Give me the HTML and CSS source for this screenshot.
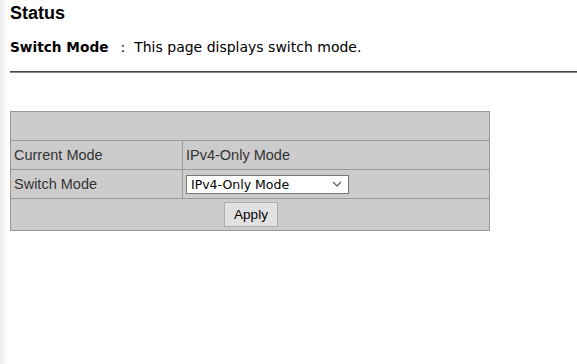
FILE: index.html
```html
<!DOCTYPE html>
<html lang="en">
  <head>
    <meta charset="UTF-8" />
    <title>Status - Switch Mode</title>
    <link rel="stylesheet" href="styles.css">
  </head>
  <body>
    <div class="page">
      <h2 class="page-title">Status</h2>
      <p class="page-desc">
        <strong>Switch Mode</strong><span class="colon">:</span>This page displays switch mode.
      </p>
      <hr class="divider" />

      <table class="config-table">
        <tr class="head-row">
          <td colspan="2">&nbsp;</td>
        </tr>
        <tr>
          <td class="label">Current Mode</td>
          <td>IPv4-Only Mode</td>
        </tr>
        <tr>
          <td class="label">Switch Mode</td>
          <td>
            <div class="select-box">
              <span>IPv4-Only Mode</span>
              <svg width="10" height="6" viewBox="0 0 10 6">
                <path d="M1 1 L5 5 L9 1" fill="none" stroke="#555" stroke-width="1.2" />
              </svg>
            </div>
          </td>
        </tr>
        <tr>
          <td colspan="2" class="actions">
            <button class="btn">Apply</button>
          </td>
        </tr>
      </table>
    </div>
  </body>
</html>
```

FILE: styles.css
```css
* {
  margin: 0;
  padding: 0;
  box-sizing: border-box;
}

body {
  background: linear-gradient(to right, #ececec 0, #f6f6f6 4px, #ffffff 8px) no-repeat;
  background-color: #ffffff;
  font-family: "DejaVu Sans", Verdana, sans-serif;
  color: #000;
  min-height: 364px;
}

.page {
  padding: 3px 0 0 10px;
}

.page-title {
  font-family: "Liberation Sans", Arial, sans-serif;
  font-size: 18px;
  font-weight: bold;
  line-height: 20px;
}

.page-desc {
  margin-top: 16px;
  font-size: 14px;
  line-height: 16px;
}

.page-desc strong {
  font-weight: bold;
  font-size: 13.7px;
}

.colon {
  margin: 0 9px 0 12px;
}

.divider {
  margin-top: 16px;
  border: 0;
  border-top: 1px solid #444;
  border-bottom: 1px solid #888;
  height: 2px;
}

.config-table {
  margin-top: 38px;
  width: 480px;
  border-collapse: collapse;
  background: #cccccc;
  font-family: "Liberation Sans", Arial, sans-serif;
  font-size: 14.5px;
  color: #333;
}

.config-table td {
  border: 1px solid #999;
  height: 29px;
  padding: 0 3px;
}

.config-table td.label {
  width: 172px;
}

.select-box {
  width: 163px;
  height: 19px;
  background: #fff;
  border: 1px solid #777;
  display: flex;
  align-items: center;
  justify-content: space-between;
  padding: 0 6px 0 4px;
  font-family: "DejaVu Sans", Verdana, sans-serif;
  font-size: 12.5px;
  color: #000;
}

.actions {
  text-align: center;
}

.config-table tr:last-child td {
  height: 32px;
}

.btn {
  width: 54px;
  height: 25px;
  background: #e1e1e1;
  border: 1px solid #adadad;
  font-family: "Liberation Sans", Arial, sans-serif;
  font-size: 13.5px;
  color: #000;
  margin-left: 2px;
}
```
